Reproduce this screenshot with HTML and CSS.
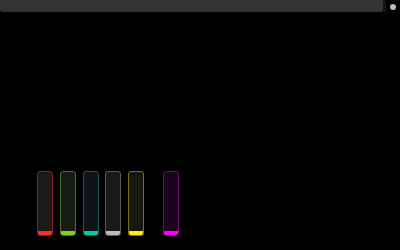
FILE: index.html
```html
<!DOCTYPE html>
<html lang="en">
<head>
    <meta charset="UTF-8">
    <meta name="viewport" content="width=device-width, initial-scale=1.0">
    <title>Levels</title>
    <link rel="stylesheet" href="styles.css">
</head>
<body>
    <header class="topbar">
        <div class="search"></div>
        <div class="divider"></div>
        <div class="status">
            <span class="dot"></span>
        </div>
    </header>
    <main class="stage">
        <div class="meters">
            <div class="meter red"><div class="level"></div></div>
            <div class="meter green"><div class="level"></div></div>
            <div class="meter teal"><div class="level"></div></div>
            <div class="meter gray"><div class="level"></div></div>
            <div class="meter yellow"><div class="level"></div></div>
            <div class="meter magenta"><div class="level"></div></div>
        </div>
    </main>
</body>
</html>
```

FILE: styles.css
```css
* {
    margin: 0;
    padding: 0;
    box-sizing: border-box;
}
html, body {
    height: 100%;
}
body {
    background: #000;
    font-family: 'Liberation Sans', Arial, sans-serif;
    display: flex;
    flex-direction: column;
    overflow: hidden;
}
.topbar {
    display: flex;
    height: 12px;
}
.search {
    flex: 1;
    background: #333;
    border-radius: 0 0 3px 3px;
}
.divider {
    width: 3px;
    background: #121612;
}
.status {
    width: 14px;
    display: flex;
    align-items: center;
    justify-content: center;
    padding-top: 1px;
}
.dot {
    width: 6px;
    height: 6px;
    border-radius: 50%;
    background: #bdbdbd;
}
.stage {
    flex: 1;
    display: flex;
    align-items: flex-end;
    padding: 0 0 14px 37px;
}
.meters {
    display: flex;
    gap: 6.75px;
}
.meter {
    width: 16px;
    height: 65px;
    border: 1px solid;
    border-radius: 3px;
    display: flex;
    align-items: flex-end;
    overflow: hidden;
}
.level {
    width: 100%;
    height: 4px;
}
.red { background: #1e1a1a; border-color: #8c1c1c; }
.red .level { background: #ff2a24; }
.green { background: #161c13; border-color: #4b6e1f; }
.green .level { background: #7ed321; }
.teal { background: #0f1417; border-color: #0f5c55; }
.teal .level { background: #00c9a7; }
.gray { background: #1a1a1a; border-color: #5a5a5a; }
.gray .level { background: #bcbcbc; }
.yellow { background: #17170f; border-color: #7a7200; }
.yellow .level { background: #ffec00; }
.magenta { background: #1a0420; border-color: #6c0a6c; margin-left: 12.25px; }
.magenta .level { background: #ff00ff; }
```
